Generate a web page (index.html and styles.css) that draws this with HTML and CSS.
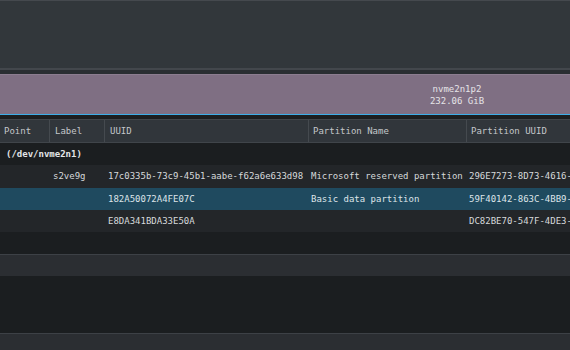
FILE: index.html
```html
<!DOCTYPE html>
<html lang="en">
<head>
    <meta charset="UTF-8">
    <meta name="viewport" content="width=device-width, initial-scale=1.0">
    <title>Partition Manager</title>
    <link rel="stylesheet" href="styles.css">
</head>
<body>
    <div class="window">
        <div class="toolbar"></div>
        <div class="divider"></div>
        <div class="diskmap">
            <div class="partition">
                <span>nvme2n1p2</span>
                <span>232.06 GiB</span>
            </div>
        </div>
        <div class="tree">
            <div class="row header">
                <div class="cell c1">Point</div>
                <div class="cell c2">Label</div>
                <div class="cell c3">UUID</div>
                <div class="cell c4">Partition Name</div>
                <div class="cell c5">Partition UUID</div>
            </div>
            <div class="row group">
                <div class="cell">(/dev/nvme2n1)</div>
            </div>
            <div class="row alt">
                <div class="cell c1"></div>
                <div class="cell c2">s2ve9g</div>
                <div class="cell c3">17c0335b-73c9-45b1-aabe-f62a6e633d98</div>
                <div class="cell c4">Microsoft reserved partition</div>
                <div class="cell c5">296E7273-8D73-4616-</div>
            </div>
            <div class="row selected">
                <div class="cell c1"></div>
                <div class="cell c2"></div>
                <div class="cell c3">182A50072A4FE07C</div>
                <div class="cell c4">Basic data partition</div>
                <div class="cell c5">59F40142-863C-4BB9-</div>
            </div>
            <div class="row alt">
                <div class="cell c1"></div>
                <div class="cell c2"></div>
                <div class="cell c3">E8DA341BDA33E50A</div>
                <div class="cell c4"></div>
                <div class="cell c5">DC82BE70-547F-4DE3-</div>
            </div>
        </div>
        <div class="panel"></div>
        <div class="log"></div>
        <div class="statusbar"></div>
    </div>
</body>
</html>
```

FILE: styles.css
```css
body {
    margin: 0;
    padding: 0;
    background-color: #1b1e20;
    font-family: "DejaVu Sans Mono", "Liberation Mono", monospace;
    font-size: 9px;
    color: #d6d9db;
    overflow: hidden;
}
.window {
    width: 570px;
    height: 350px;
    display: flex;
    flex-direction: column;
    overflow: hidden;
}
.toolbar {
    height: 67px;
    flex: none;
    border-top: 1px solid #45494e;
    background-color: #32373b;
}
.divider {
    height: 2px;
    flex: none;
    background-color: #43474c;
}
.diskmap {
    flex: none;
    padding-top: 4px;
    background-color: #2a2e32;
    overflow: hidden;
}
.partition {
    width: 914px;
    height: 39px;
    border-top: 1px solid #8c7d90;
    border-bottom: 1px solid #3daee9;
    background-color: #7f6f83;
    color: #e6e4e8;
    display: flex;
    flex-direction: column;
    align-items: center;
    justify-content: center;
    line-height: 12px;
}
.tree {
    height: 139px;
    flex: none;
    background-color: #1b1e20;
    overflow: hidden;
}
.row {
    display: flex;
    height: 22.3px;
    align-items: center;
    white-space: nowrap;
}
.cell {
    padding-left: 3px;
    overflow: hidden;
    box-sizing: border-box;
    flex: none;
}
.c1 { width: 50px; }
.c2 { width: 55px; }
.c3 { width: 204px; }
.c4 { width: 158px; padding-left: 2px; }
.c5 { width: 103px; padding-left: 2px; }
.header {
    height: 22px;
    margin-top: 4px;
    background-color: #31363b;
    border-top: 1px solid #40454a;
    border-bottom: 1px solid #40454a;
    color: #c4c7ca;
    align-items: stretch;
}
.header .cell {
    padding-left: 4px;
    display: flex;
    align-items: center;
    border-right: 1px solid #454a4f;
}
.header .c2, .header .c3 {
    padding-left: 5px;
}
.header .c5 {
    border-right: none;
}
.group {
    font-weight: bold;
    color: #e4e6e8;
}
.group .cell {
    padding-left: 6px;
}
.alt {
    background-color: #232629;
}
.selected {
    background-color: #1f4a5f;
    color: #dde4e9;
}
.panel {
    height: 21px;
    flex: none;
    border-top: 1px solid #3d4146;
    background-color: #2b2e32;
}
.log {
    height: 57px;
    flex: none;
    background-color: #1b1e20;
}
.statusbar {
    flex: 1;
    border-top: 1px solid #3d4146;
    background-color: #2b2e32;
}
```
